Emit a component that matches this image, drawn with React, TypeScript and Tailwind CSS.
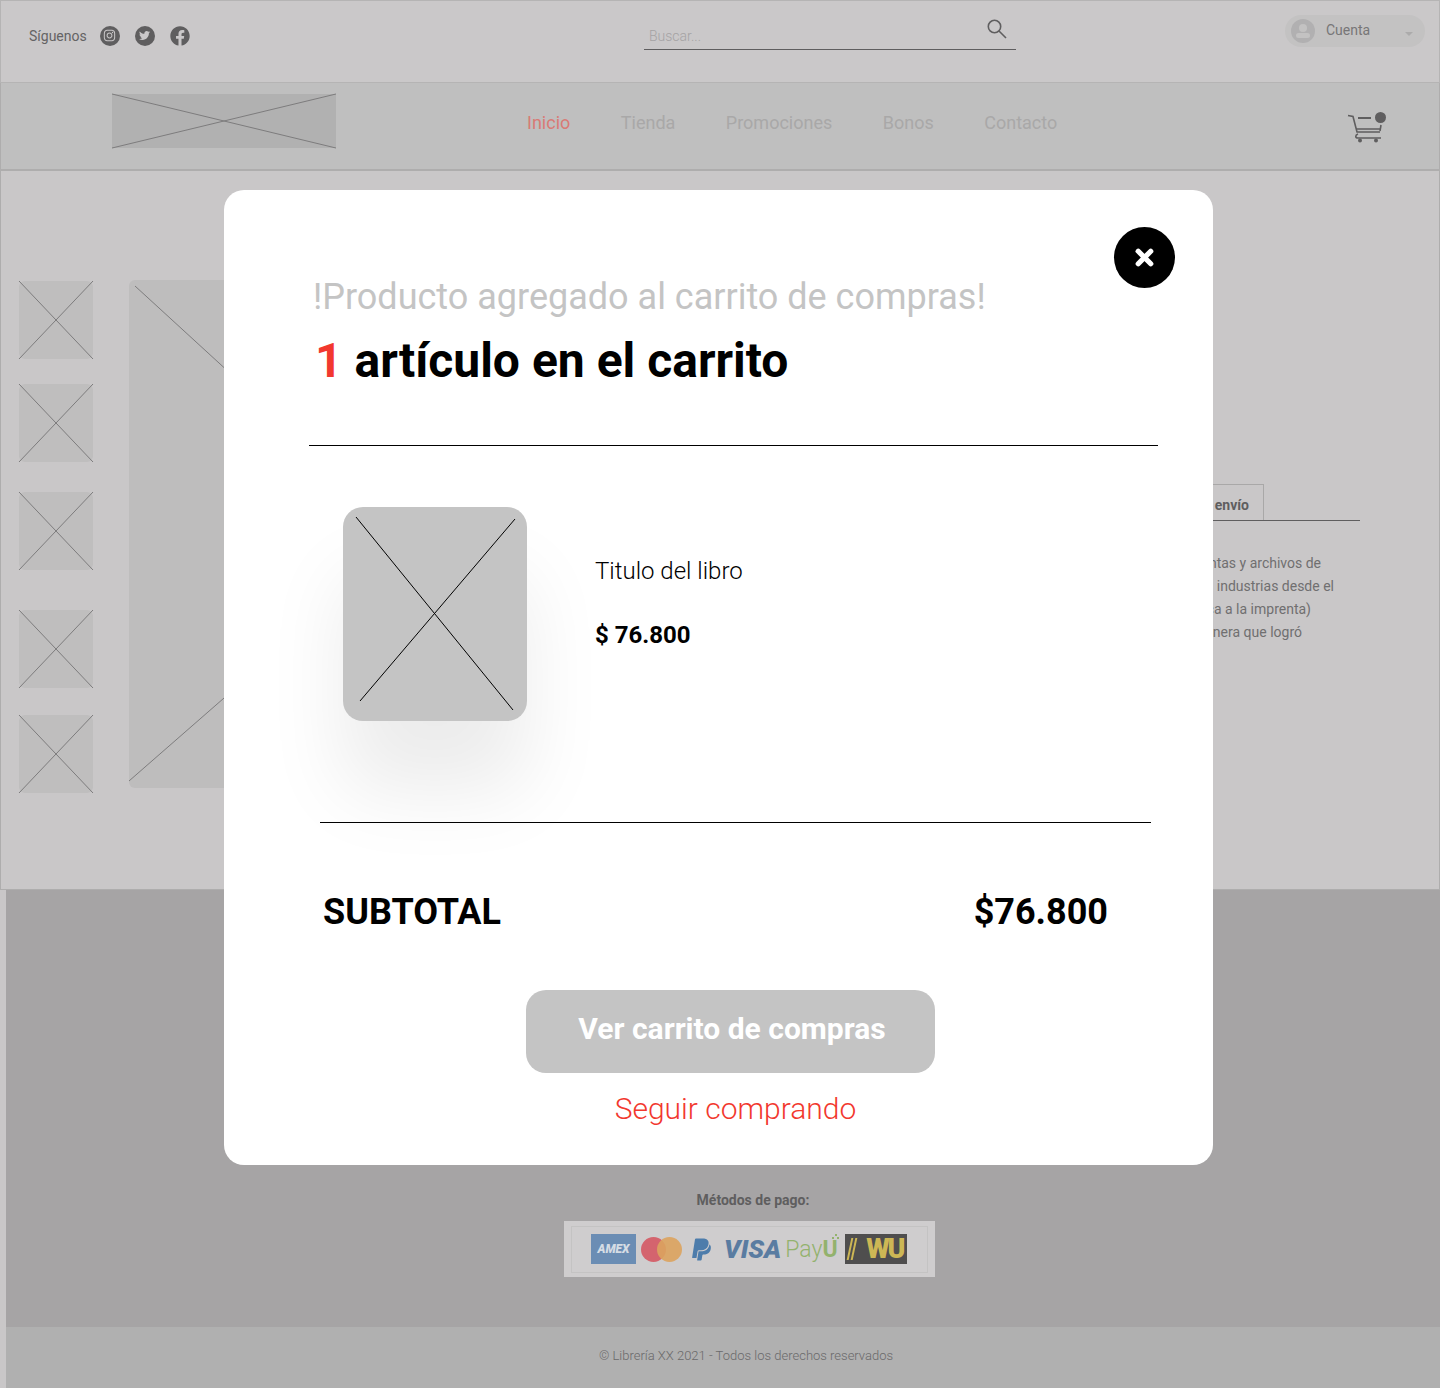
import { FaFacebook, FaInstagram, FaTwitter, FaPaypal } from "react-icons/fa"
import { X } from "lucide-react"

type Props = {
  className: string
  line?: string
  w: number
  h: number
  // x1 y1 x2 y2 for each stroke of the cross
  a?: number[]
  b?: number[]
}

function Placeholder({ className, line = "#7d7c7d", w, h, a, b }: Props) {
  const one = a || [0, 0, w, h]
  const two = b || [w, 0, 0, h]
  return (
    <div className={"relative shrink-0 " + className}>
      <svg className="absolute inset-0 h-full w-full overflow-visible" viewBox={`0 0 ${w} ${h}`}>
        <line x1={one[0]} y1={one[1]} x2={one[2]} y2={one[3]} stroke={line} strokeWidth="1" />
        <line x1={two[0]} y1={two[1]} x2={two[2]} y2={two[3]} stroke={line} strokeWidth="1" />
      </svg>
    </div>
  )
}

function CartIcon() {
  return (
    <svg width="40" height="32" viewBox="0 0 40 32" fill="none" stroke="#5f5e5f" strokeWidth="1.6">
      <path d="M1 3.5 L6 4.5 L10 20 H33" />
      <path d="M11 22 C8 23 8 26 11 26 H34" />
      <path d="M11 6 H24" strokeWidth="2" />
      <path d="M34 13 L33 19 M9 17 H33" />
      <circle cx="13" cy="28.5" r="2" fill="#5f5e5f" stroke="none" />
      <circle cx="29" cy="28.5" r="2" fill="#5f5e5f" stroke="none" />
      <circle cx="33.5" cy="5.5" r="5.5" fill="#5f5e5f" stroke="none" />
    </svg>
  )
}

function PaymentLogos() {
  return (
    <div className="flex h-[56px] w-[371px] items-center justify-center bg-[#cfcdce] p-[3px_7px]">
      <div className="flex h-[47px] w-full items-center justify-start border border-[#c4c3c3] pl-[19px]">
        <div className="flex h-[30px] w-[45px] shrink-0 items-center justify-center bg-[#6b8db4] text-[12px] font-black italic text-[#d5dce4]">AMEX</div>
        <div className="ml-[5px] flex shrink-0">
          <div className="h-[25px] w-[25px] rounded-full bg-[#d4646e]" />
          <div className="-ml-[9px] h-[25px] w-[25px] rounded-full bg-[#dca35e] opacity-90" />
        </div>
        <FaPaypal className="ml-[7px] shrink-0 text-[25px] text-[#4d7cab]" />
        <span className="ml-[10px] text-[26px] font-black italic leading-none text-[#5a7ca1]">VISA</span>
        <span className="relative ml-[4px] text-[23px] font-light leading-none text-[#93b26d]">
          Pay<span className="font-bold">U</span>
          <svg className="absolute -right-[2px] -top-[5px]" width="8" height="8" viewBox="0 0 8 8" fill="#93b26d">
            <rect x="0" y="4" width="2" height="2" />
            <rect x="3" y="1" width="2" height="2" />
            <rect x="5" y="4" width="2" height="2" />
          </svg>
        </span>
        <div className="ml-[7px] flex h-[30px] w-[62px] shrink-0 items-center justify-between bg-[#4f4e4e] pl-[4px] pr-[3px]">
          <div className="flex gap-[2px]">
            <div className="h-[22px] w-[2px] -skew-x-12 bg-[#cdb755]" />
            <div className="h-[22px] w-[2px] -skew-x-12 bg-[#cdb755]" />
          </div>
          <span className="text-[27px] font-black leading-none tracking-[-2px] text-[#cdb755]">WU</span>
        </div>
      </div>
    </div>
  )
}

export default function App() {
  const thumbs = ["mt-0", "mt-[25px]", "mt-[30px]", "mt-[40px]", "mt-[27px]"]

  return (
    <div className="relative flex h-[1388px] w-[1440px] flex-col overflow-hidden bg-[#c9c7c8] font-['Roboto',sans-serif]">
      {/* Barra superior */}
      <header className="flex h-[83px] shrink-0 items-start border border-[#b5b4b4] bg-[#cac8c9]">
        <div className="flex w-[620px] items-center pl-[28px] pt-[23px] text-[#646364]">
          <span className="mt-[2px] text-[14px]">Síguenos</span>
          <span className="ml-[13px] flex h-[20px] w-[20px] items-center justify-center rounded-full bg-[#5f5e5f] text-[13px] text-[#cac8c9]"><FaInstagram /></span>
          <span className="ml-[15px] flex h-[20px] w-[20px] items-center justify-center rounded-full bg-[#5f5e5f] text-[11px] text-[#cac8c9]"><FaTwitter /></span>
          <FaFacebook className="ml-[15px] text-[20px] text-[#5f5e5f]" />
        </div>
        <div className="mt-[13px] ml-[23px] flex h-[36px] w-[372px] items-start justify-between border-b border-[#5f5e5f] pl-[5px] pr-[9px]">
          <span className="mt-[12px] text-[14px] font-light text-[#a5a3a4]">Buscar...</span>
          <svg className="mt-[5px]" width="20" height="20" viewBox="0 0 20 20" fill="none" stroke="#5f5e5f" strokeWidth="1.6">
            <circle cx="7.5" cy="7.5" r="6.2" />
            <path d="M12 12 L19 19" />
          </svg>
        </div>
        <div className="mt-[14px] ml-[269px] flex h-[32px] w-[140px] items-center rounded-full bg-[#c3c2c2] pl-[6px] pr-[12px]">
          <div className="flex h-[24px] w-[24px] flex-col items-center justify-center rounded-full bg-[#b1b0b1]">
            <div className="h-[8px] w-[8px] rounded-full bg-[#c3c2c2]" />
            <div className="mt-[1px] h-[5px] w-[14px] rounded-full bg-[#c3c2c2]" />
          </div>
          <span className="mb-[2px] ml-[11px] text-[14px] text-[#777677]">Cuenta</span>
          <span className="ml-auto mt-[5px] border-x-[4px] border-t-[4px] border-x-transparent border-t-[#acabab]" />
        </div>
      </header>

      {/* Menu */}
      <nav className="flex h-[88px] shrink-0 items-center border-x border-b-2 border-[#aeadad] bg-[#bfbfbf]">
        <Placeholder className="mb-[10px] ml-[111px] h-[54px] w-[224px] bg-[#b1b1b1]" w={224} h={54} />
        <div className="mb-[8px] ml-[191px] flex items-center gap-[50.5px] text-[18px] text-[#a9a8a8]">
          <span className="text-[#d97a75]">Inicio</span>
          <span>Tienda</span>
          <span>Promociones</span>
          <span>Bonos</span>
          <span>Contacto</span>
        </div>
        <div className="ml-auto mr-[52px] mt-[4px]"><CartIcon /></div>
      </nav>

      {/* Producto */}
      <main className="flex h-[719px] shrink-0 border-x border-b border-[#aeadad] bg-[#c9c7c8]">
        <div className="ml-[18px] mt-[110px] flex w-[74px] flex-col">
          {thumbs.map((mt) => (
            <Placeholder key={mt} className={mt + " h-[78px] w-[74px] rounded-[6px] bg-[#bfbebe]"} w={74} h={78} />
          ))}
        </div>
        <Placeholder
          className="ml-[36px] mt-[109px] h-[508px] w-[552px] rounded-[6px] bg-[#bebdbd]"
          w={552}
          h={508}
          a={[6, 6, 546, 501]}
          b={[552, 19, 0, 501]}
        />
        <div className="ml-auto mr-[79px] mt-[313px] flex w-[400px] flex-col">
          <div className="flex justify-end border-b border-[#5f5e5f] pr-[96px]">
            <div className="flex h-[36px] items-center border border-b-0 border-[#a9a8a8] px-[14px] pt-[6px] text-[14px] font-bold text-[#5f5e5f]">Información de envío</div>
          </div>
          <div className="mt-[31px] flex flex-col text-right text-[14px] leading-[23px] text-[#706f70]">
            <p className="pr-[39px]">imprentas y archivos de</p>
            <p className="pr-[26px]">de las industrias desde el</p>
            <p className="pr-[49px]">dedica a la imprenta)</p>
            <p className="pr-[58px]">tal manera que logró</p>
          </div>
        </div>
      </main>

      {/* Pie */}
      <footer className="ml-[6px] flex flex-1 flex-col bg-[#a6a4a5]">
        <div className="flex flex-1 flex-col items-center pl-[60px] pt-[300px]">
          <p className="text-[14px] font-bold text-[#5f5e5f]">Métodos de pago:</p>
          <div className="-ml-[7px] mt-[10px]"><PaymentLogos /></div>
        </div>
        <div className="flex h-[61px] items-center justify-center bg-[#b0b0b0] pb-[4px] pl-[46px] text-[13px] font-light text-[#6a696a]">
          © Librería XX 2021 - Todos los derechos reservados
        </div>
      </footer>

      {/* Modal */}
      <div className="absolute left-[224px] top-[190px] flex h-[975px] w-[989px] flex-col rounded-[20px] bg-white">
        <button className="absolute right-[38px] top-[37px] flex h-[61px] w-[61px] items-center justify-center rounded-full bg-black text-white">
          <X size={25} strokeWidth={5} />
        </button>
        <div className="ml-[89px] mt-[86px] text-[36px] leading-[42px] text-[#c4c4c4]">!Producto agregado al carrito de compras!</div>
        <div className="ml-[91px] mt-[15px] text-[48px] font-bold leading-[56px] text-black">
          <span className="text-[#f2382e]">1</span> artículo en el carrito
        </div>
        <div className="ml-[85px] mt-[56px] h-px w-[849px] bg-black" />
        <div className="ml-[119px] mt-[61px] flex">
          <Placeholder
            className="h-[214px] w-[184px] rounded-[20px] bg-[#c4c4c4] shadow-[0_70px_80px_rgba(0,0,0,0.08)]"
            line="#000000"
            w={184}
            h={214}
            a={[13, 10, 170, 203]}
            b={[172, 12, 17, 194]}
          />
          <div className="ml-[68px] pt-[47px]">
            <p className="text-[24px] font-light leading-[34px] text-black">Titulo del libro</p>
            <p className="mt-[30px] text-[24px] font-bold leading-[34px] text-black">$ 76.800</p>
          </div>
        </div>
        <div className="ml-[96px] mt-[101px] h-px w-[831px] bg-black" />
        <div className="ml-[99px] mr-[105px] mt-[67px] flex items-center justify-between text-[36px] font-bold leading-[44px] text-black">
          <span>SUBTOTAL</span>
          <span>$76.800</span>
        </div>
        <div className="ml-[302px] mt-[56px] flex h-[83px] w-[409px] items-center justify-center rounded-[20px] bg-[#c4c4c4] pb-[6px] pl-[3px] text-[30px] font-bold text-white">
          Ver carrito de compras
        </div>
        <div className="mt-[16px] pl-[34px] text-center text-[30px] font-light leading-[40px] text-[#f2382e]">Seguir comprando</div>
      </div>
    </div>
  )
}
